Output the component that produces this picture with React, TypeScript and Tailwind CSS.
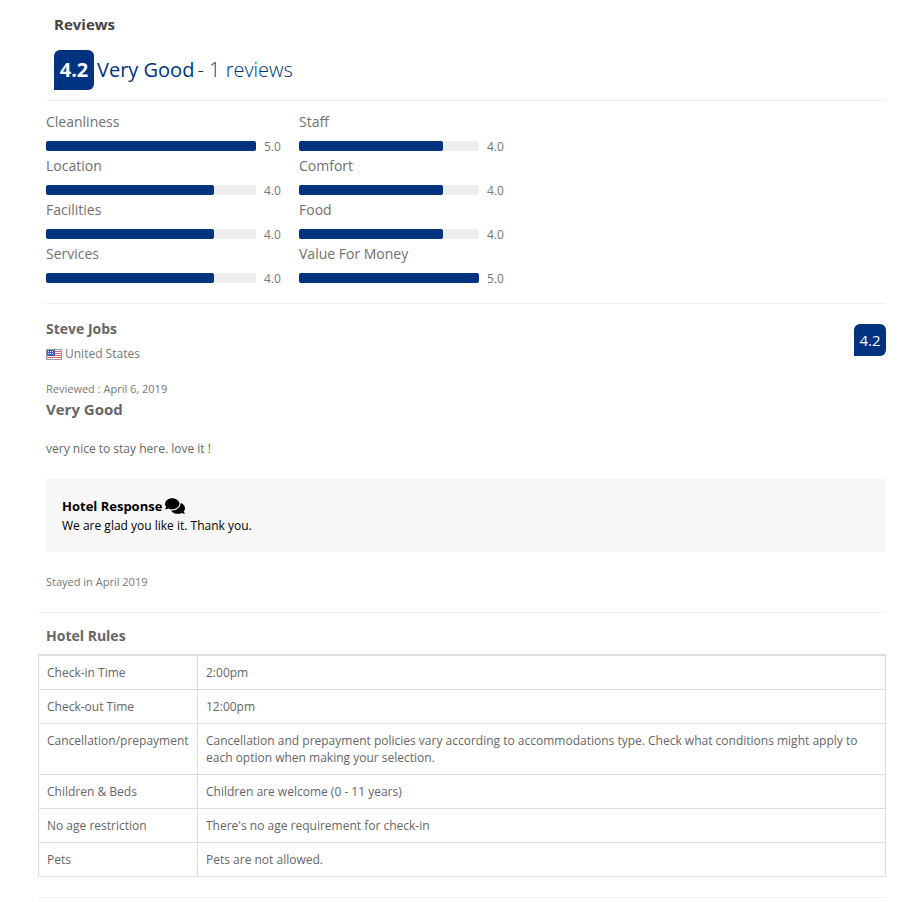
import React from "react";
import { FaComments } from "react-icons/fa";

const left = [
  { label: "Cleanliness", pct: 100, val: "5.0" },
  { label: "Location", pct: 80, val: "4.0" },
  { label: "Facilities", pct: 80, val: "4.0" },
  { label: "Services", pct: 80, val: "4.0" },
];
const right = [
  { label: "Staff", pct: 80, val: "4.0" },
  { label: "Comfort", pct: 80, val: "4.0" },
  { label: "Food", pct: 80, val: "4.0" },
  { label: "Value For Money", pct: 100, val: "5.0" },
];
const rules: [string, string][] = [
  ["Check-in Time", "2:00pm"],
  ["Check-out Time", "12:00pm"],
  ["Cancellation/prepayment", "Cancellation and prepayment policies vary according to accommodations type. Check what conditions might apply to each option when making your selection."],
  ["Children & Beds", "Children are welcome (0 - 11 years)"],
  ["No age restriction", "There's no age requirement for check-in"],
  ["Pets", "Pets are not allowed."],
];

function Rating({ label, pct, val, w }: { label: string; pct: number; val: string; w: string }) {
  return (
    <div className="h-[44px]">
      <div className="h-[22px] text-[14px] leading-[22px] text-[#707070]">{label}</div>
      <div className="mt-[8px] flex items-start">
        <div className={`h-[10px] ${w} rounded-[2px] bg-[#eeeeee]`}>
          <div className="h-full rounded-[2px] bg-[#00337f]" style={{ width: `${pct}%` }} />
        </div>
        <span className="ml-[8px] text-[12px] leading-[12px] text-[#777777]">{val}</span>
      </div>
    </div>
  );
}

function Flag() {
  return (
    <svg width="16" height="11" viewBox="0 0 16 11" className="mr-[3px] shrink-0">
      <rect width="16" height="11" fill="#ffffff" />
      {[2, 4, 6, 8].map((y) => (
        <rect key={y} y={y} width="16" height="1" fill="#e0606a" />
      ))}
      <rect x="1" y="1" width="8" height="6" fill="#3f5fd0" />
      {[2, 4, 6].map((x) => [2, 4].map((y) => <rect key={`${x}-${y}`} x={x} y={y} width="1" height="1" fill="#e6eafa" />))}
      <rect x="0.5" y="0.5" width="15" height="10" fill="none" stroke="#9a9aa5" strokeWidth="1" />
    </svg>
  );
}

export default function App() {
  return (
    <div className="min-h-[902px] w-[920px] bg-white pl-[38px] pr-[34px] font-['Open_Sans',sans-serif] text-[#666666]">
      <div className="pl-[8px]">
        <div className="pl-[8px] pt-[14px] text-[15px] font-bold leading-[20px] text-[#444444]">Reviews</div>
        <div className="mt-[16px] flex items-center pl-[8px]">
          <div className="flex h-[40px] w-[40px] items-center justify-center rounded-[6px] rounded-bl-none bg-[#00337f] text-[20px] font-bold text-white">4.2</div>
          <span className="ml-[3px] text-[20px] text-[#00337f]">Very Good</span>
          <span className="ml-[3px] text-[20px] font-light text-[#00337f]">- 1 reviews</span>
        </div>
        <div className="mt-[10px] border-t border-[#eeeeee] pt-[10px]">
          <div className="flex">
            <div className="w-[253px]">
              {left.map((r) => <Rating key={r.label} {...r} w="w-[210px]" />)}
            </div>
            <div>
              {right.map((r) => <Rating key={r.label} {...r} w="w-[180px]" />)}
            </div>
          </div>
        </div>
        <div className="mt-[16px] border-t border-[#eeeeee] pt-[15px]">
          <div className="flex items-start justify-between">
            <div>
              <div className="text-[14px] font-bold leading-[20px] text-[#666666]">Steve Jobs</div>
              <div className="mt-[5px] flex items-center text-[12px] leading-[20px] text-[#777777]"><Flag />United States</div>
            </div>
            <div className="mt-[5px] flex h-[32px] w-[32px] items-center justify-center rounded-[6px] rounded-bl-none bg-[#00337f] text-[15px] text-white">4.2</div>
          </div>
          <div className="mt-[15px] text-[11px] leading-[20px] text-[#777777]">Reviewed : April 6, 2019</div>
          <div className="-mt-[1px] text-[15px] font-bold leading-[22px] text-[#666666]">Very Good</div>
          <div className="mt-[19px] text-[12px] leading-[20px] text-[#666666]">very nice to stay here. love it !</div>
          <div className="mt-[20px] h-[73px] bg-[#f7f7f7] px-[16px] pt-[17px] text-black">
            <div className="flex items-center text-[13px] font-bold leading-[20px]">Hotel Response<FaComments className="ml-[3px] text-[20px]" /></div>
            <div className="text-[12px] leading-[20px]">We are glad you like it. Thank you.</div>
          </div>
          <div className="mt-[20px] text-[11px] leading-[20px] text-[#777777]">Stayed in April 2019</div>
        </div>
      </div>
      <div className="mt-[20px] border-t border-[#eef1f8] pl-[8px] pt-[13px] text-[14px] font-bold leading-[20px] text-[#666666]">Hotel Rules</div>
      <table className="mt-[8px] w-full border-collapse border-t-2 border-[#dddddd] text-[12px] leading-[17px] text-[#666666]">
        <tbody>
          {rules.map(([a, b]) => (
            <tr key={a}>
              <td className="w-[159px] border border-[#dddddd] px-[8px] py-[8px] align-top">{a}</td>
              <td className="border border-[#dddddd] px-[8px] py-[8px] align-top">{b}</td>
            </tr>
          ))}
        </tbody>
      </table>
      <div className="mt-[20px] border-t border-[#eef1f8]" />
    </div>
  );
}
